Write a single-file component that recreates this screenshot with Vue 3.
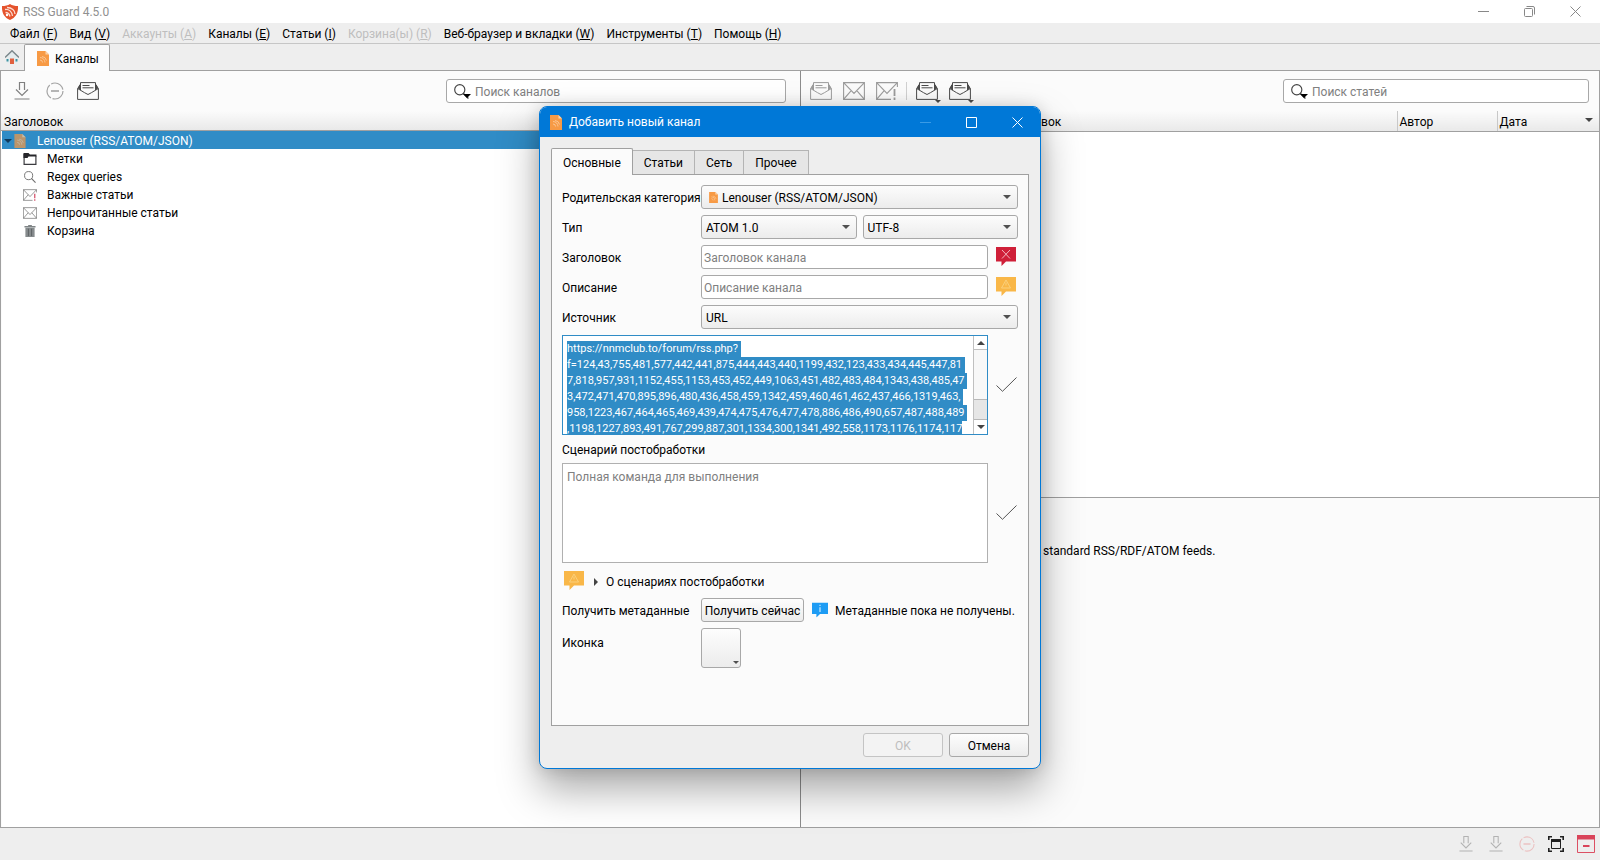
<script setup>
import { ref, onMounted } from 'vue'

const menus = [
  { label: 'Файл', key: 'F' },
  { label: 'Вид', key: 'V' },
  { label: 'Аккаунты', key: 'A', disabled: true },
  { label: 'Каналы', key: 'E' },
  { label: 'Статьи', key: 'I' },
  { label: 'Корзина(ы)', key: 'R', disabled: true },
  { label: 'Веб-браузер и вкладки', key: 'W' },
  { label: 'Инструменты', key: 'T' },
  { label: 'Помощь', key: 'H' }
]

const tree = [
  { icon: 'folder', label: 'Метки' },
  { icon: 'lens', label: 'Regex queries' },
  { icon: 'mail-important', label: 'Важные статьи' },
  { icon: 'mail', label: 'Непрочитанные статьи' },
  { icon: 'trash', label: 'Корзина' }
]

const tabs = ['Основные', 'Статьи', 'Сеть', 'Прочее']

const source = ref(
  [
    'https://nnmclub.to/forum/rss.php?',
    'f=124,43,755,481,577,442,441,875,444,443,440,1199,432,123,433,434,445,447,81',
    '7,818,957,931,1152,455,1153,453,452,449,1063,451,482,483,484,1343,438,485,47',
    '3,472,471,470,895,896,480,436,458,459,1342,459,460,461,462,437,466,1319,463,',
    '958,1223,467,464,465,469,439,474,475,476,477,478,886,486,490,657,487,488,489',
    ',1198,1227,893,491,767,299,887,301,1334,300,1341,492,558,1173,1176,1174,117'
  ].join('\n')
)
const sourceBox = ref(null)

onMounted(() => {
  const box = sourceBox.value
  box.focus()
  box.setSelectionRange(0, box.value.length, 'backward')
  box.scrollTop = 0
  box.scrollLeft = 0
})
</script>

<template>
  <div class="window">
    <svg class="defs" aria-hidden="true">
      <symbol id="rss-file" viewBox="0 0 12 15">
        <path d="M0 0h8.500l3.500 3.500V15H0z" fill="#f79a45" />
        <path d="M8.500 0v3.500H12z" fill="#fcd3a8" />
        <path d="M3 6.500a5 5 0 0 1 5 5M3 9a2.500 2.500 0 0 1 2.500 2.500M5 5.500a5 5 0 0 1 4.500 4" fill="none" stroke="#fbc590" stroke-width="1" />
      </symbol>
      <symbol id="download" viewBox="0 0 16 18">
        <path d="M5.500 8V.500h5V8M2 7.500l6 6 6-6M.500 17h15" fill="none" stroke="currentColor" stroke-width="1.200" />
      </symbol>
      <symbol id="stop" viewBox="0 0 18 18">
        <circle cx="9" cy="9" r="8" fill="none" stroke="currentColor" stroke-width="1.200" stroke-dasharray="15 1.750" />
        <path d="M5 9h8" stroke="currentColor" stroke-width="1.600" />
      </symbol>
      <symbol id="mail-open" viewBox="0 0 22 18">
        <path d="M3 2.500L.600 7v10.400h20.800V7L19 2.500M3.500 8V.600h15V8M.600 6.500l7 4.200L11 12.500l3.400-1.800 7-4.200M5.500 3.500h7M5.500 5.800h11" fill="none" stroke="currentColor" stroke-width="1" />
        <path d="M3.500 2v5.500L.600 6.200zM18.500 2v5.500l2.900-1.300z" fill="currentColor" />
      </symbol>
      <symbol id="mail" viewBox="0 0 22 18">
        <path d="M.600 .600h20.800v16.800H.600zM.600 .600L11 11.500 21.400 .600M.600 17.400l7.600-8.800M21.400 17.400l-7.600-8.800" fill="none" stroke="currentColor" stroke-width="1.100" />
      </symbol>
      <symbol id="mail-important" viewBox="0 0 22 18">
        <path d="M15 17.400H.600V.600h20.800V5M.600 .600L11 11.500 21.400 .600M.600 17.400l7.600-8.800" fill="none" stroke="currentColor" stroke-width="1.100" />
        <path d="M18.500 7v7M18.500 15.500V18" stroke="var(--mark, currentColor)" stroke-width="1.800" />
      </symbol>
      <symbol id="lens" viewBox="0 0 13 13">
        <circle cx="5" cy="5" r="4.400" fill="none" stroke="currentColor" stroke-width="1" />
        <path d="M8 8l4.500 4.500" stroke="currentColor" stroke-width="1.200" />
      </symbol>
      <symbol id="folder" viewBox="0 0 13 12">
        <path d="M.600 1v10.400h11.800V3" fill="none" stroke="#3c3c40" stroke-width="1.200" />
        <path d="M0 0h5l1.500 1.500H13V3.500H5L4 5H0z" fill="#26262a" />
      </symbol>
      <symbol id="trash" viewBox="0 0 12 13">
        <path d="M0 1.200h4V0h4v1.200h4V2.600H0z" fill="#7f8486" />
        <path d="M1 3h10v10H1z" fill="#868b8d" />
        <path d="M4.300 4v8M7.700 4v8" stroke="#5c6163" stroke-width="1" />
      </symbol>
      <symbol id="arrow" viewBox="0 0 8 4">
        <path d="M0 0h8L4 4z" fill="currentColor" />
      </symbol>
      <symbol id="check" viewBox="0 0 21 15">
        <path d="M.500 8.500L6.500 14.300 20.500 .500" fill="none" stroke="#555" stroke-width="1" />
      </symbol>
      <symbol id="bubble" viewBox="0 0 20 19">
        <path d="M0 0h20v14.500H10L5.500 19v-4.500H0z" fill="currentColor" />
      </symbol>
    </svg>

    <header class="titlebar">
      <svg class="app-icon" viewBox="0 0 16 16" aria-hidden="true">
        <path d="M8 0c2 1.500 5 2 8 2 .300 6-1.500 11-8 14C1.500 13-.300 8 0 2c3 0 6-.500 8-2z" fill="#e5532d" />
        <path d="M3 5.500c4-.500 7 2 7.500 6.500M5 3.500c5 0 8 3 8 6.500M3.500 8.500c2.500 0 4 1.500 4.500 4" fill="none" stroke="#fbdcd2" stroke-width="1.300" />
        <circle cx="5" cy="11" r="1.200" fill="#fff" />
      </svg>
      <h1>RSS Guard 4.5.0</h1>
      <div class="window-buttons">
        <button type="button" aria-label="Свернуть"><svg width="11" height="11" viewBox="0 0 11 11"><path d="M0 5.500h11" stroke="#888" /></svg></button>
        <button type="button" aria-label="Восстановить"><svg width="11" height="11" viewBox="0 0 11 11" fill="none" stroke="#888"><rect x=".500" y="2.500" width="8" height="8" rx="1" /><path d="M2.500 .500H9a1.500 1.500 0 0 1 1.500 1.500v6.500" /></svg></button>
        <button type="button" aria-label="Закрыть"><svg width="11" height="11" viewBox="0 0 11 11"><path d="M.500 .500l10 10M10.500 .500l-10 10" stroke="#888" /></svg></button>
      </div>
    </header>

    <nav class="menubar">
      <button v-for="m in menus" :key="m.key" type="button" :disabled="m.disabled">{{ m.label }} (<u>{{ m.key }}</u>)</button>
    </nav>

    <div class="main-tabs">
      <button type="button" class="home" aria-label="Домой">
        <svg width="14" height="14" viewBox="0 0 14 14">
          <path d="M2 6v7h10V6L7 2z" fill="#e4ecee" />
          <path d="M0 7.500L7 .800l7 6.700" fill="none" stroke="#7b888c" stroke-width="1.500" />
          <path d="M5 8.500h4V14H5z" fill="#e0603f" />
          <path d="M1.500 9h2v2.500h-2zM10.500 9h2v2.500h-2z" fill="#3d93a2" />
        </svg>
      </button>
      <button type="button" class="main-tab"><svg width="12" height="15"><use href="#rss-file" /></svg>Каналы</button>
    </div>

    <main class="workspace">
      <section class="feeds">
        <div class="toolbar">
          <button type="button" class="tool grey" aria-label="Обновить"><svg width="16" height="18"><use href="#download" /></svg></button>
          <button type="button" class="tool faded" aria-label="Остановить"><svg width="18" height="18"><use href="#stop" /></svg></button>
          <button type="button" class="tool" aria-label="Прочитано"><svg width="22" height="18"><use href="#mail-open" /></svg></button>
          <label class="search feeds-search">
            <svg width="15" height="15"><use href="#lens" /></svg>
            <svg class="search-arrow" width="8" height="4"><use href="#arrow" /></svg>
            <input type="text" placeholder="Поиск каналов" aria-label="Поиск каналов" />
          </label>
        </div>
        <div class="head">Заголовок</div>
        <ul class="tree">
          <li class="root">
            <svg class="caret" width="8" height="4"><use href="#arrow" /></svg>
            <svg class="root-icon" width="12" height="14"><use href="#rss-file" /></svg>
            <span>Lenouser (RSS/ATOM/JSON)</span>
          </li>
          <li v-for="t in tree" :key="t.label">
            <svg class="tree-icon" width="14" height="12"><use :href="'#' + t.icon" /></svg>
            <span>{{ t.label }}</span>
          </li>
        </ul>
      </section>

      <section class="articles">
        <div class="toolbar">
          <button type="button" class="tool light" aria-label="Отметить прочитанным"><svg width="22" height="18"><use href="#mail-open" /></svg></button>
          <button type="button" class="tool light" aria-label="Отметить непрочитанным"><svg width="22" height="18"><use href="#mail" /></svg></button>
          <button type="button" class="tool light" aria-label="Важное"><svg width="22" height="18"><use href="#mail-important" /></svg></button>
          <span class="separator"></span>
          <button type="button" class="tool drop" aria-label="Фильтр статей"><svg width="22" height="18"><use href="#mail-open" /></svg><svg class="drop-arrow" width="6" height="3"><use href="#arrow" /></svg></button>
          <button type="button" class="tool drop" aria-label="Подсветка статей"><svg width="22" height="18"><use href="#mail-open" /></svg><svg class="drop-arrow" width="6" height="3"><use href="#arrow" /></svg></button>
          <label class="search articles-search">
            <svg width="15" height="15"><use href="#lens" /></svg>
            <svg class="search-arrow" width="8" height="4"><use href="#arrow" /></svg>
            <input type="text" placeholder="Поиск статей" aria-label="Поиск статей" />
          </label>
        </div>
        <div class="list">
          <table>
            <thead>
              <tr>
                <th class="col-title">Заголовок</th>
                <th class="col-author">Автор</th>
                <th class="col-date"><span class="date">Дата<svg width="8" height="4"><use href="#arrow" /></svg></span></th>
              </tr>
            </thead>
          </table>
        </div>
        <div class="preview"><p>for standard RSS/RDF/ATOM feeds.</p></div>
      </section>
    </main>

    <footer class="statusbar">
      <svg class="dl" width="14" height="16"><use href="#download" /></svg>
      <svg class="dl" width="14" height="16"><use href="#download" /></svg>
      <svg class="st" width="16" height="16"><use href="#stop" /></svg>
      <svg width="16" height="16" viewBox="0 0 16 16" aria-hidden="true">
        <path d="M.800 4V.800H4M12 .800h3.200V4M15.200 12v3.200H12M4 15.200H.800V12" fill="none" stroke="#222" stroke-width="1.600" />
        <path d="M3.500 4h9v8.500h-9z" fill="none" stroke="#222" />
        <path d="M3 3h10v3H3z" fill="#222" />
      </svg>
      <svg width="18" height="18" viewBox="0 0 18 18" aria-hidden="true">
        <path d="M.500 .500h17v17H.500z" fill="none" stroke="#dc5064" />
        <path d="M0 0h18v4.500H0z" fill="#d9445a" />
        <path d="M6 11h6.500" stroke="#d9445a" stroke-width="2" />
      </svg>
    </footer>

    <div class="dialog" role="dialog" aria-labelledby="dialog-title">
      <header class="dialog-title">
        <svg width="12" height="15"><use href="#rss-file" /></svg>
        <h2 id="dialog-title">Добавить новый канал</h2>
        <div class="dialog-buttons">
          <button type="button" disabled aria-label="Свернуть"><svg width="11" height="11" viewBox="0 0 11 11"><path d="M0 5.500h11" stroke="#3a9be6" /></svg></button>
          <button type="button" aria-label="Развернуть"><svg width="11" height="11" viewBox="0 0 11 11"><path d="M.500 .500h10v10H.500z" fill="none" stroke="#fff" /></svg></button>
          <button type="button" aria-label="Закрыть"><svg width="11" height="11" viewBox="0 0 11 11"><path d="M.500 .500l10 10M10.500 .500l-10 10" stroke="#fff" /></svg></button>
        </div>
      </header>

      <div class="dialog-body">
        <div class="tabs" role="tablist">
          <button v-for="(t, i) in tabs" :key="t" type="button" role="tab" :aria-selected="i === 0" :class="{ active: i === 0 }">{{ t }}</button>
        </div>

        <form class="pane" @submit.prevent>
          <div class="row">
            <label for="parent">Родительская категория</label>
            <span class="combo with-icon">
              <svg class="combo-icon" width="9" height="11"><use href="#rss-file" /></svg>
              <select id="parent"><option>Lenouser (RSS/ATOM/JSON)</option></select>
              <svg class="combo-arrow" width="8" height="4"><use href="#arrow" /></svg>
            </span>
          </div>
          <div class="row">
            <label for="type">Тип</label>
            <span class="combo">
              <select id="type"><option>ATOM 1.0</option></select>
              <svg class="combo-arrow" width="8" height="4"><use href="#arrow" /></svg>
            </span>
            <span class="combo">
              <select aria-label="Кодировка"><option>UTF-8</option></select>
              <svg class="combo-arrow" width="8" height="4"><use href="#arrow" /></svg>
            </span>
          </div>
          <div class="row">
            <label for="title">Заголовок</label>
            <input id="title" class="line" type="text" placeholder="Заголовок канала" />
            <span class="status">
              <svg width="20" height="19" viewBox="0 0 20 19" class="red"><use href="#bubble" /><path d="M6 3l8 8.500M14 3l-8 8.500" stroke="#f3b6bf" /></svg>
            </span>
          </div>
          <div class="row">
            <label for="description">Описание</label>
            <input id="description" class="line" type="text" placeholder="Описание канала" />
            <span class="status">
              <svg width="20" height="19" viewBox="0 0 20 19" class="amber"><use href="#bubble" /><path d="M10 3l4.500 8h-9zM10 5.500v3" fill="none" stroke="#fbd07c" /></svg>
            </span>
          </div>
          <div class="row">
            <label for="kind">Источник</label>
            <span class="combo">
              <select id="kind"><option>URL</option></select>
              <svg class="combo-arrow" width="8" height="4"><use href="#arrow" /></svg>
            </span>
          </div>

          <div class="area-row">
            <div class="area focused">
              <textarea ref="sourceBox" v-model="source" aria-label="Источник" spellcheck="false" wrap="off"></textarea>
              <div class="scroll" aria-hidden="true">
                <span class="scroll-end"><svg class="up" width="8" height="4"><use href="#arrow" /></svg></span>
                <span class="track"><span class="thumb"></span></span>
                <span class="scroll-end down"><svg width="8" height="4"><use href="#arrow" /></svg></span>
              </div>
            </div>
            <span class="status"><svg width="21" height="15"><use href="#check" /></svg></span>
          </div>

          <label class="area-label" for="script">Сценарий постобработки</label>
          <div class="area-row">
            <div class="area">
              <textarea id="script" placeholder="Полная команда для выполнения"></textarea>
            </div>
            <span class="status"><svg width="21" height="15"><use href="#check" /></svg></span>
          </div>

          <div class="about">
            <svg width="20" height="19" viewBox="0 0 20 19" class="amber"><use href="#bubble" /><path d="M10 3l4.500 8h-9zM10 5.500v3" fill="none" stroke="#fbd07c" /></svg>
            <button type="button"><svg width="4" height="8" viewBox="0 0 4 8"><path d="M0 0l4 4-4 4z" fill="#444" /></svg>О сценариях постобработки</button>
          </div>

          <div class="row fetch">
            <span class="name">Получить метаданные</span>
            <button type="button" class="push">Получить сейчас</button>
            <svg width="16" height="16" viewBox="0 0 20 19" class="blue"><use href="#bubble" /><path d="M10 6v6M10 3v1.500" stroke="#c9eaff" stroke-width="1.500" /></svg>
            <span class="message">Метаданные пока не получены.</span>
          </div>
          <div class="row icon-row">
            <span class="name">Иконка</span>
            <button type="button" class="push icon-button" aria-label="Иконка"><svg width="6" height="3"><use href="#arrow" /></svg></button>
          </div>
        </form>

        <div class="actions">
          <button type="button" class="push" disabled>OK</button>
          <button type="button" class="push">Отмена</button>
        </div>
      </div>
    </div>
  </div>
</template>

<style>
body {
  margin: 0;
}
</style>

<style scoped>
* {
  box-sizing: border-box;
}

.window {
  position: relative;
  display: flex;
  flex-direction: column;
  min-height: 100vh;
  background: #eee;
  color: #000;
  font: 12px/16px Roboto, "Noto Sans", sans-serif;
}

button,
input,
select,
textarea {
  font: inherit;
  color: inherit;
}

button {
  padding: 0;
  border: 0;
  background: none;
}

svg {
  display: block;
  flex: none;
}

.defs {
  position: absolute;
  width: 0;
  height: 0;
}

.titlebar {
  display: flex;
  align-items: center;
  height: 23px;
  padding-left: 2px;
  background: #fff;
}

.app-icon {
  width: 16px;
  height: 16px;
}

h1,
h2 {
  margin: 0;
  font-size: 12px;
  font-weight: 400;
}

h1 {
  margin-left: 5px;
  color: #909090;
}

.window-buttons {
  display: flex;
  margin-left: auto;
  padding-right: 2px;
}

.window-buttons button {
  display: grid;
  place-items: center;
  width: 46px;
  height: 20px;
}

.menubar {
  display: flex;
  gap: 12px;
  height: 21px;
  padding: 1px 0 0 10px;
  border-bottom: 1px solid #c6c6c6;
}

.menubar button:disabled {
  color: #bebebe;
}

.main-tabs {
  display: flex;
  align-items: stretch;
  height: 27px;
  border-bottom: 1px solid #a0a0a0;
}

.home {
  display: grid;
  place-items: center;
  width: 24px;
}

.main-tab {
  display: flex;
  align-items: center;
  gap: 6px;
  height: 27px;
  padding: 1px 10px 0 12px;
  border: 1px solid #a0a0a0;
  border-bottom: 0;
  border-radius: 2px 2px 0 0;
  background: #fcfcfc;
}

.workspace {
  display: grid;
  grid-template-columns: 1fr 1fr;
  flex: 1;
  border: 1px solid #a0a0a0;
  border-top: 0;
  background: #fbfbfb;
}

.feeds,
.articles {
  display: flex;
  flex-direction: column;
  min-width: 0;
}

.articles {
  border-left: 1px solid #8c8c8c;
}

.toolbar {
  display: flex;
  align-items: center;
  height: 40px;
  padding-left: 7px;
}

.tool {
  display: grid;
  place-items: center;
  position: relative;
  width: 33px;
  height: 30px;
  color: #4a4a4a;
}

.feeds .tool:first-child {
  width: 28px;
  margin-right: 2px;
}

.tool.grey {
  color: #808080;
}

.tool.faded {
  color: #a4a4a4;
}

.tool.light {
  color: #9c9c9c;
}

.articles .toolbar {
  padding-left: 3px;
}

.separator {
  width: 1px;
  height: 18px;
  margin: 0 3px;
  background: #d0d0d0;
}

.drop-arrow {
  position: absolute;
  right: 2px;
  bottom: 3px;
}

.search {
  display: flex;
  align-items: center;
  position: relative;
  height: 24px;
  margin-left: auto;
  padding-left: 7px;
  border: 1px solid #a8a8a8;
  border-radius: 3px;
  background: #fff;
  color: #444;
}

.search-arrow {
  position: absolute;
  left: 16px;
  bottom: 4px;
  color: #000;
}

.search input {
  flex: 1;
  min-width: 0;
  padding: 1px 6px 0;
  border: 0;
  outline: 0;
  background: none;
}

.feeds-search {
  width: 340px;
  margin-right: 14px;
}

.articles-search {
  width: 306px;
  margin-right: 10px;
}

::placeholder {
  color: #808080;
  opacity: 1;
}

.head {
  display: flex;
  align-items: center;
  height: 20px;
  padding: 2px 0 0 3px;
  border-bottom: 1px solid #a0a0a0;
  background: linear-gradient(#fbfbfb, #e9e9e9);
}

.tree {
  flex: 1;
  margin: 0 0 0 1px;
  padding: 0;
  list-style: none;
  background: #fff;
}

.tree li {
  display: flex;
  align-items: center;
  height: 18px;
  padding: 1px 0 0 21px;
}

.tree-icon {
  margin-right: 10px;
  color: #6e6e6e;
  --mark: #d0405c;
}

.tree li.root {
  padding-left: 2px;
  background: #308cc6;
  color: #fff;
}

.caret {
  margin-right: 2px;
  color: #103a5c;
}

.root-icon {
  margin-right: 11px;
  opacity: 0.7;
}

.list {
  height: 386px;
  background: #fff;
}

table {
  width: 100%;
  border-collapse: collapse;
  table-layout: fixed;
}

th {
  height: 20px;
  padding: 2px 0 0 2px;
  border-bottom: 1px solid #a0a0a0;
  background: linear-gradient(#fbfbfb, #e9e9e9);
  font-weight: 400;
  text-align: left;
}

.col-title {
  padding-left: 201px;
}

.col-author {
  width: 100px;
  border-left: 1px solid #c8c8c8;
}

.col-date {
  width: 102px;
  border-left: 1px solid #c8c8c8;
}

.date {
  display: flex;
  justify-content: space-between;
  padding-right: 6px;
}

.date svg {
  margin-top: 4px;
  color: #444;
}

.preview {
  flex: 1;
  padding: 45px 0 0 224px;
  border-top: 1px solid #a0a0a0;
}

.preview p {
  margin: 0;
}

.statusbar {
  display: flex;
  align-items: center;
  justify-content: flex-end;
  gap: 13px;
  height: 32px;
  padding-right: 5px;
}

.dl {
  margin-right: 3px;
  color: #b2b2b2;
}

.st {
  color: #ecc0c0;
}

.dialog {
  position: absolute;
  top: 106px;
  left: 539px;
  width: 502px;
  overflow: hidden;
  border: 1px solid #0078d7;
  border-radius: 8px;
  background: #eee;
  box-shadow: 0 20px 40px rgba(0, 0, 0, 0.34), 0 0 16px rgba(0, 0, 0, 0.14);
}

.dialog-title {
  display: flex;
  align-items: center;
  height: 30px;
  padding-left: 10px;
  background: #0078d7;
  color: #fff;
}

.dialog-title h2 {
  margin-left: 7px;
}

.dialog-buttons {
  display: flex;
  margin-left: auto;
}

.dialog-buttons button {
  display: grid;
  place-items: center;
  width: 46px;
  height: 30px;
}

.dialog-body {
  padding: 11px;
}

.tabs {
  display: flex;
  align-items: flex-end;
}

.tabs button {
  height: 24px;
  padding: 1px 11px 0;
  border: 1px solid #b4b4b4;
  border-left: 0;
  border-bottom: 0;
  background: #e6e6e6;
}

.tabs button.active {
  position: relative;
  height: 27px;
  margin-bottom: -1px;
  border: 1px solid #a0a0a0;
  border-bottom: 0;
  border-radius: 2px 2px 0 0;
  background: #fbfbfb;
}

.pane {
  display: flex;
  flex-direction: column;
  min-height: 552px;
  padding: 10px;
  border: 1px solid #a0a0a0;
  background: #fbfbfb;
}

.row {
  display: flex;
  align-items: center;
  gap: 6px;
  height: 24px;
  margin-bottom: 6px;
}

.row > label,
.row > .name {
  flex: none;
  width: 133px;
  padding-top: 2px;
  white-space: nowrap;
}

.combo {
  display: block;
  position: relative;
  flex: 1;
}

.combo select {
  display: block;
  width: 100%;
  height: 24px;
  padding: 1px 4px 0;
  appearance: none;
  border: 1px solid #a8a8a8;
  border-radius: 3px;
  outline: 0;
  background: linear-gradient(#fcfcfc, #ececec);
}

.combo.with-icon select {
  padding-left: 20px;
}

.combo-icon {
  position: absolute;
  top: 7px;
  left: 8px;
}

.combo-arrow {
  position: absolute;
  top: 10px;
  right: 7px;
  color: #505050;
  pointer-events: none;
}

.line {
  flex: 1;
  min-width: 0;
  height: 24px;
  padding: 1px 2px 0;
  border: 1px solid #a8a8a8;
  border-radius: 3px;
  outline: 0;
  background: #fff;
}

.status {
  display: grid;
  flex: none;
  place-items: center;
  width: 24px;
  padding-bottom: 2px;
}

.red {
  color: #cf1f38;
}

.amber {
  color: #f9b748;
}

.blue {
  color: #1e9cf4;
}

.area-row {
  display: flex;
  align-items: center;
  gap: 6px;
}

.area {
  display: flex;
  flex: 1;
  min-width: 0;
  height: 100px;
  border: 1px solid #b0b0b0;
  background: #fff;
}

.area.focused {
  border-color: #308cc6;
}

.area textarea {
  flex: 1;
  min-width: 0;
  padding: 5px 4px 0;
  overflow: hidden;
  border: 0;
  outline: 0;
  background: none;
  resize: none;
}

.area.focused textarea {
  padding-right: 0;
  font-size: 11px;
}

.area textarea::selection {
  background: #308cc6;
  color: #fff;
}

.scroll {
  display: flex;
  flex-direction: column;
  width: 14px;
  border-left: 1px solid #c0c0c0;
}

.scroll-end {
  display: grid;
  place-items: center;
  height: 14px;
  border-bottom: 1px solid #c0c0c0;
  color: #444;
}

.scroll-end.down {
  border: 0;
}

.up {
  transform: rotate(180deg);
}

.track {
  display: flex;
  flex: 1;
  flex-direction: column;
  justify-content: flex-end;
  background: #f8f8f8;
}

.thumb {
  height: 21px;
  border: solid #b8b8b8;
  border-width: 1px 0;
  background: #e6e6e6;
}

.area-label {
  display: block;
  margin: 7px 0 5px;
}

.about {
  display: flex;
  align-items: center;
  height: 35px;
  padding-left: 2px;
}

.about button {
  display: flex;
  align-items: center;
  gap: 8px;
  margin-left: 10px;
  padding-top: 2px;
}

.push {
  height: 24px;
  padding: 1px 0 0;
  border: 1px solid #a8a8a8;
  border-radius: 3px;
  background: linear-gradient(#fdfdfd, #ececec);
}

.fetch .push {
  width: 103px;
  flex: none;
  white-space: nowrap;
}

.fetch .blue {
  margin-left: 2px;
}

.fetch .message {
  margin-left: 1px;
  padding-top: 2px;
  white-space: nowrap;
}

.icon-row {
  align-items: flex-start;
  height: 40px;
}

.icon-row .name {
  padding-top: 7px;
}

.icon-button {
  display: flex;
  align-items: flex-end;
  justify-content: flex-end;
  width: 40px;
  height: 40px;
  padding: 3px 1px;
  color: #505050;
}

.actions {
  display: flex;
  justify-content: flex-end;
  gap: 6px;
  padding-top: 7px;
}

.actions .push {
  width: 80px;
}

.actions .push:disabled {
  border-color: #c4c4c4;
  background: #f3f3f3;
  color: #bebebe;
}
</style>
